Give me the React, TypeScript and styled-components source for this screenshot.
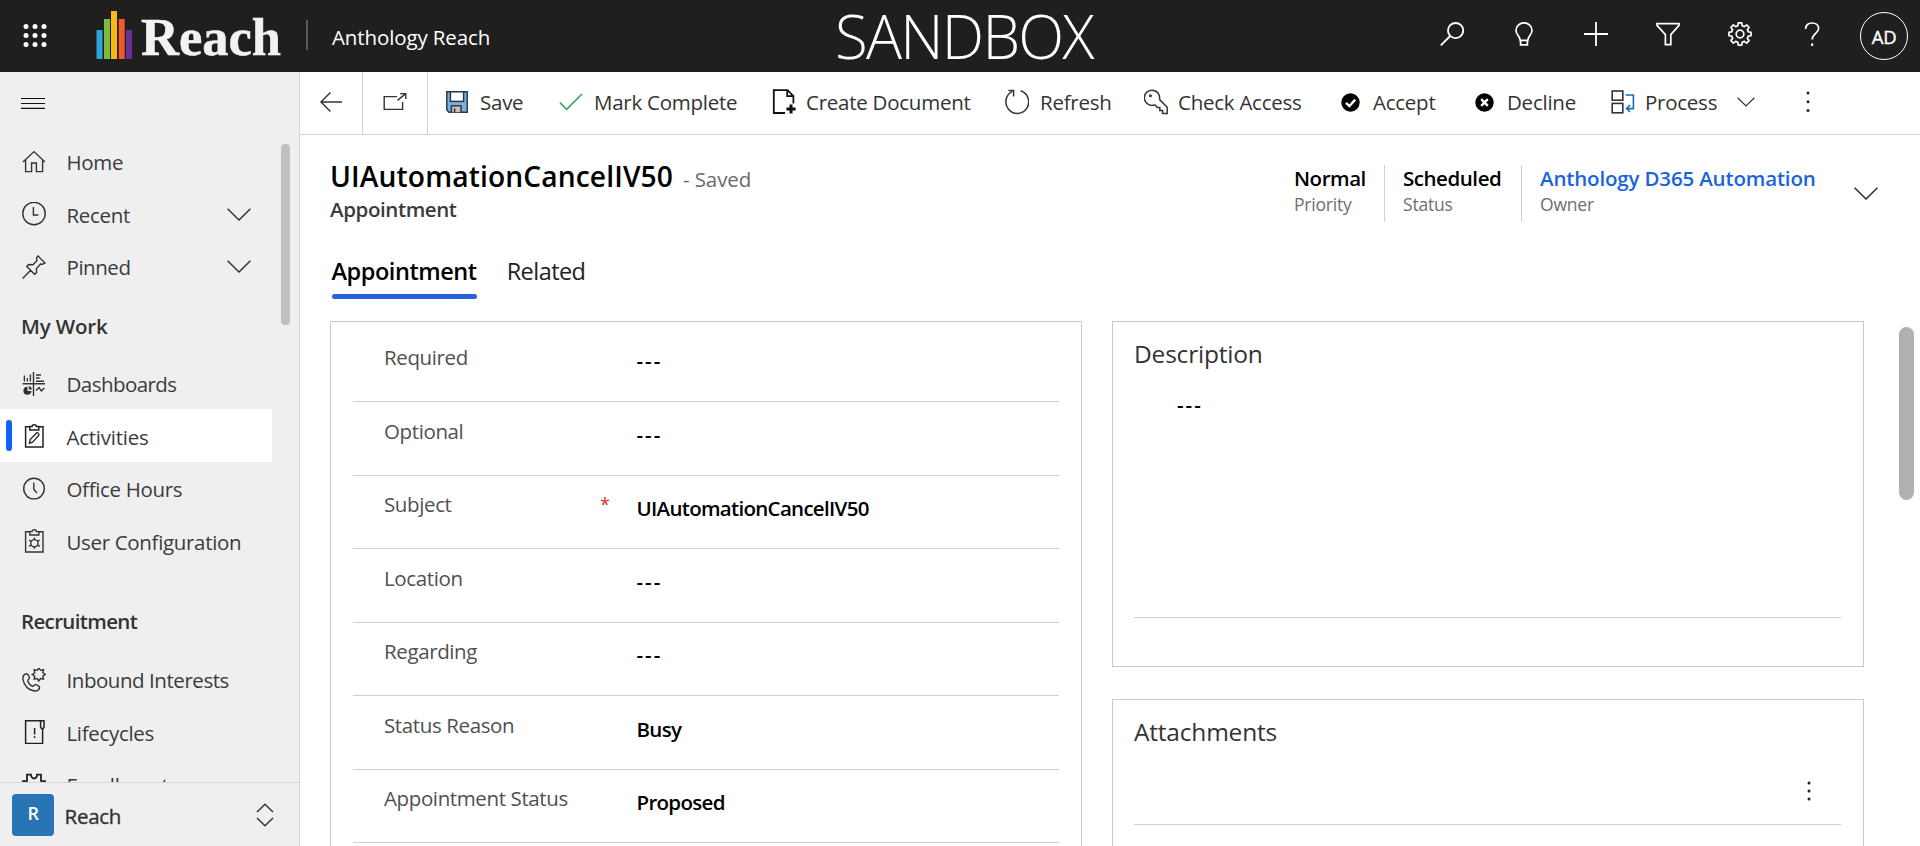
import React from "react";
import styled, { createGlobalStyle } from "styled-components";

const GlobalStyle = createGlobalStyle`
  *, *::before, *::after { box-sizing: border-box; }
  html, body { margin: 0; padding: 0; background: #fff; }
  body { overflow: hidden; }
  svg { display: block; flex: none; }
`;

const Page = styled.div`
  display: flex;
  flex-direction: column;
  width: 1920px;
  height: 846px;
  overflow: hidden;
  background: #fff;
  color: #333;
  font-family: "Open Sans", "Noto Sans", sans-serif;
  font-size: 20.5px;
  letter-spacing: -0.25px;
  white-space: nowrap;
`;

/* ---------- top bar ---------- */

const TopBar = styled.header`
  display: grid;
  grid-template-columns: 835px 1fr auto;
  flex: none;
  height: 72px;
  background: #1f1f1f;
  color: #fff;
`;

const Brand = styled.div`
  display: flex;
  align-items: center;
  height: 72px;
  padding-left: 23px;
`;

const Logo = styled.div`
  display: flex;
  align-items: center;
  margin-left: 49px;
`;

const LogoWord = styled.span`
  margin: 2px 0 0 8px;
  width: 141px;
  font: 700 52.5px/60px "Liberation Serif", serif;
  letter-spacing: 0;
  color: #f2f2f2;
  -webkit-text-stroke: 0.5px #f2f2f2;
`;

const BrandDivider = styled.span`
  width: 2px;
  height: 30px;
  margin: 0 24px 2px 24px;
  background: #5c5c5c;
`;

const AppName = styled.span`
  margin-top: 1px;
  letter-spacing: -0.12px;
`;

const Environment = styled.div`
  font-weight: 300;
  font-size: 60px;
  line-height: 72px;
  letter-spacing: -1.75px;
`;

const TopActions = styled.nav`
  display: flex;
  align-items: center;
  gap: 48px;
  height: 68px;
  padding-right: 12px;
`;

const Avatar = styled.div`
  display: flex;
  align-items: center;
  justify-content: center;
  width: 48px;
  height: 48px;
  margin: 4px 0 0 -12px;
  border: 1.5px solid #fff;
  border-radius: 50%;
  font-size: 18.5px;
  -webkit-text-stroke: 0.35px #fff;
  padding-top: 1px;
`;

/* ---------- body ---------- */

const Body = styled.div`
  display: flex;
  flex: 1;
  min-height: 0;
`;

const Sidebar = styled.aside`
  display: flex;
  flex-direction: column;
  flex: none;
  width: 300px;
  border-right: 1px solid #d6d6d6;
  background: #efefef;
`;

const NavScroll = styled.div`
  display: flex;
  flex: 1;
  min-height: 0;
  overflow: hidden;
`;

const NavList = styled.div`
  flex: none;
  width: 272px;
`;

const NavTrack = styled.div`
  padding: 72px 0 0 9px;
`;

const NavThumb = styled.div`
  width: 9px;
  height: 181px;
  border-radius: 4px;
  background: #c1c1c1;
`;

const MenuToggle = styled.div`
  height: 62.5px;
  padding: 25px 0 0 21px;
`;

const NavRow = styled.div<{ $active?: boolean }>`
  display: flex;
  align-items: center;
  height: 52.5px;
  padding: 2px 0 0 22px;
  background: ${(p) => (p.$active ? "#fff" : "transparent")};
  color: #3b3b3b;
  position: relative;

  &::before {
    content: "";
    display: ${(p) => (p.$active ? "block" : "none")};
    position: absolute;
    left: 6px;
    top: 11px;
    width: 6px;
    height: 31px;
    border-radius: 3px;
    background: #0b63f8;
  }
`;

const NavLabel = styled.span<{ $ls: number }>`
  flex: 1;
  margin-left: 20.5px;
  padding-top: 1px;
  letter-spacing: ${(p) => p.$ls}px;
`;

const NavChevron = styled.span`
  margin-right: 21px;
`;

const NavHeading = styled.div<{ $top: number; $height: number; $ls: number }>`
  height: ${(p) => p.$height}px;
  padding: ${(p) => p.$top}px 0 0 21px;
  font-weight: 600;
  line-height: 30px;
  letter-spacing: ${(p) => p.$ls}px;
  color: #333;
`;

const AreaSwitcher = styled.div`
  display: flex;
  align-items: center;
  flex: none;
  height: 64px;
  padding: 1px 25px 0 12px;
  border-top: 1px solid #d6d6d6;
`;

const AreaBadge = styled.span`
  display: flex;
  align-items: center;
  justify-content: center;
  width: 42px;
  height: 42px;
  padding-bottom: 4px;
  border-radius: 4px;
  background: #2874b4;
  color: #fff;
  font-size: 18px;
  font-weight: 600;
`;

const AreaName = styled.span`
  flex: 1;
  margin: 1px 0 0 10.5px;
  -webkit-text-stroke: 0.35px #333;
`;

/* ---------- main column ---------- */

const Main = styled.main`
  display: flex;
  flex-direction: column;
  flex: 1;
  min-width: 0;
`;

const CommandBar = styled.div`
  display: flex;
  flex: none;
  height: 63px;
  border-bottom: 1px solid #d2d2d2;
`;

const IconCell = styled.div<{ $width: number }>`
  display: flex;
  align-items: center;
  justify-content: center;
  width: ${(p) => p.$width}px;
  border-right: 1px solid #d2d2d2;
  padding: 0 1px 2px 0;
`;

const Command = styled.div<{ $width: number; $gap?: number }>`
  display: flex;
  align-items: center;
  flex: none;
  gap: ${(p) => p.$gap ?? 10}px;
  width: ${(p) => p.$width}px;
  padding-bottom: 2px;
`;

const Commands = styled.div`
  display: flex;
  padding-left: 17px;
`;

const RecordHeader = styled.div`
  display: flex;
  flex: none;
  justify-content: space-between;
  height: 110px;
  padding: 22px 42px 0 30px;
`;

const TitleLine = styled.div`
  display: flex;
  align-items: baseline;
  height: 38px;
  line-height: 38px;
`;

const Title = styled.h1`
  margin: 0;
  width: 353px;
  font-size: 28.2px;
  font-weight: 600;
  letter-spacing: 0.12px;
  color: #000;
`;

const SavedState = styled.span`
  color: #6a6a6a;
  letter-spacing: -0.1px;
`;

const EntityName = styled.div`
  margin-top: -1px;
  font-weight: 600;
  line-height: 30px;
  letter-spacing: -0.4px;
  color: #3b3b3b;
`;

const Facts = styled.div`
  display: flex;
  align-items: flex-start;
  padding-top: 8px;
`;

const Fact = styled.div<{ $width: number; $last?: boolean }>`
  width: ${(p) => p.$width}px;
  height: 57px;
  margin-right: ${(p) => (p.$last ? 0 : 18)}px;
  border-right: ${(p) => (p.$last ? "none" : "1px solid #cfcfcf")};
`;

const FactValue = styled.div<{ $link?: boolean }>`
  font-size: 20.5px;
  font-weight: 600;
  line-height: 26px;
  letter-spacing: ${(p) => (p.$link ? -0.16 : -0.45)}px;
  color: ${(p) => (p.$link ? "#1a63e0" : "#000")};
`;

const FactLabel = styled.div`
  font-size: 17.5px;
  line-height: 26px;
  letter-spacing: -0.2px;
  color: #6e6e6e;
`;

const FactChevron = styled.div`
  margin: 22px 0 0 37px;
`;

const Tabs = styled.div`
  display: flex;
  flex: none;
  gap: 30px;
  height: 76px;
  padding-left: 31.5px;
`;

const Tab = styled.div<{ $active?: boolean }>`
  height: 54px;
  padding-top: 10px;
  font-size: 23.5px;
  font-weight: ${(p) => (p.$active ? 600 : 400)};
  line-height: 32px;
  letter-spacing: ${(p) => (p.$active ? -0.45 : -0.55)}px;
  color: ${(p) => (p.$active ? "#000" : "#222")};

  &::after {
    content: "";
    display: ${(p) => (p.$active ? "block" : "none")};
    height: 5px;
    margin-top: 7px;
    border-radius: 3px;
    background: #2563dc;
  }
`;

const Content = styled.div`
  display: flex;
  flex: 1;
  min-height: 0;
  padding-left: 30px;
  overflow: hidden;
`;

const Card = styled.section<{ $height: number }>`
  flex: none;
  width: 752px;
  height: ${(p) => p.$height}px;
  border: 1px solid #c9c9c9;
  padding: 0 22px 0 22px;
`;

const SideCard = styled(Card)`
  padding: 0 22px 0 21px;
`;

const Stack = styled.div`
  display: flex;
  flex-direction: column;
  gap: 32px;
  margin-left: 30px;
`;

const FieldRow = styled.div<{ $first?: boolean }>`
  display: grid;
  grid-template-columns: 216px 36.5px 1fr;
  height: ${(p) => (p.$first ? 80 : 73.5)}px;
  padding: ${(p) => (p.$first ? 20 : 13.5)}px 0 0 31px;
  border-bottom: 1px solid #cfcfcf;
`;

const FieldLabel = styled.div`
  line-height: 30px;
  letter-spacing: -0.38px;
  color: #505050;
`;

const RequiredMark = styled.div`
  line-height: 30px;
  color: #e02b20;
  font-size: 18px;
`;

const FieldValue = styled.div`
  padding-top: 4px;
  font-weight: 600;
  line-height: 30px;
  letter-spacing: -0.7px;
  color: #000;
`;

const EmptyValue = styled(FieldValue)`
  padding-top: 3px;
  letter-spacing: 2px;
`;

const CardTitle = styled.h2`
  margin: 0;
  padding-top: 14px;
  font-size: 24.5px;
  font-weight: 400;
  line-height: 36px;
  letter-spacing: -0.2px;
  color: #333;
`;

const DescriptionBody = styled.div`
  height: 246px;
  padding: 14px 0 0 43px;
  border-bottom: 1px solid #cfcfcf;
`;

const AttachmentTools = styled.div`
  display: flex;
  justify-content: flex-end;
  height: 75px;
  padding: 31px 30px 0 0;
  border-bottom: 1px solid #cfcfcf;
`;

const PageTrack = styled.div`
  padding: 6px 0 0 35px;
`;

const PageThumb = styled.div`
  width: 15px;
  height: 173px;
  border-radius: 8px;
  background: #b0b0b0;
`;

/* ---------- icons ---------- */

type SvgProps = {
  w?: number;
  h?: number;
  color?: string;
  sw?: number;
  children: React.ReactNode;
};

const Svg = ({ w = 24, h = 24, color = "#333", sw = 1.4, children }: SvgProps) => (
  <svg width={w} height={h} viewBox={`0 0 ${w} ${h}`} fill="none" stroke={color} strokeWidth={sw}>
    {children}
  </svg>
);

const gearPath = (cx: number, cy: number, outer: number, inner: number, teeth: number) => {
  const pts: string[] = [];
  const step = (Math.PI * 2) / teeth;
  for (let i = 0; i < teeth; i++) {
    const a = i * step - Math.PI / 2;
    [
      [-0.32, inner],
      [-0.2, outer],
      [0.2, outer],
      [0.32, inner],
    ].forEach(([f, r]) => {
      pts.push(`${(cx + Math.cos(a + f * step) * r).toFixed(2)} ${(cy + Math.sin(a + f * step) * r).toFixed(2)}`);
    });
  }
  return `M${pts.join("L")}Z`;
};

const starPath = (cx: number, cy: number, outer: number, inner: number, points: number) => {
  const pts: string[] = [];
  for (let i = 0; i < points * 2; i++) {
    const a = (i * Math.PI) / points - Math.PI / 2;
    const r = i % 2 ? inner : outer;
    pts.push(`${(cx + Math.cos(a) * r).toFixed(2)} ${(cy + Math.sin(a) * r).toFixed(2)}`);
  }
  return `M${pts.join("L")}Z`;
};

const Waffle = () => (
  <svg width="24" height="24" viewBox="0 0 24 24" fill="#fff">
    {[2.5, 11.5, 20.5].map((y) => [3, 12, 21].map((x) => <circle key={`${x}-${y}`} cx={x} cy={y} r="2.5" />))}
  </svg>
);

const LogoBars = () => (
  <svg width="37" height="50" viewBox="0 0 37 50">
    <rect x="0.5" y="19" width="6" height="29" fill="#2fa4db" />
    <rect x="8" y="8" width="6" height="40" fill="#7fbb42" />
    <rect x="15" y="0" width="6" height="48" fill="#f7b917" />
    <rect x="22.7" y="8" width="6" height="40" fill="#f05a28" />
    <rect x="30" y="19" width="6" height="29" fill="#68318f" />
  </svg>
);

const SearchIcon = () => (
  <Svg color="#fff" sw={1.8}>
    <circle cx="15.6" cy="8.6" r="7.6" />
    <path d="M10.2 14 L0.8 23.4" />
  </Svg>
);

const BulbIcon = () => (
  <Svg color="#fff" sw={1.7}>
    <path d="M8.2 18.4 C8.2 14.5 4 12.5 4 8.4 A8 7.6 0 0 1 20 8.4 C20 12.5 15.8 14.5 15.8 18.4 Z" />
    <path d="M8.6 18.4 V22.9 H15.4 V18.4" />
  </Svg>
);

const PlusIcon = () => (
  <Svg color="#fff" sw={1.8}>
    <path d="M12 0 V24 M0 12 H24" />
  </Svg>
);

const FilterIcon = () => (
  <Svg color="#fff" sw={1.7}>
    <path d="M1 1.6 H23 V3.4 L14.8 12.6 V22.6 H9.4 V12.6 L1 3.4 Z" />
  </Svg>
);

const GearIcon = () => (
  <Svg color="#fff" sw={1.7}>
    <path d={gearPath(12, 12, 11.2, 8.6, 8)} strokeLinejoin="round" />
    <circle cx="12" cy="12" r="3.8" />
  </Svg>
);

const HelpIcon = () => (
  <Svg color="#fff" sw={1.7}>
    <path d="M5.6 7 C5.6 3 8.4 1 12 1 C15.8 1 18.6 3.2 18.6 6.6 C18.6 11.4 12.2 11.6 12.2 17.6" />
    <path d="M12.2 21.4 V24" strokeWidth="2" />
  </Svg>
);

const MenuIcon = () => (
  <Svg color="#111" sw={1.2} h={12}>
    <path d="M0 1.5 H24 M0 6.5 H24 M0 11.3 H24" />
  </Svg>
);

const Chevron = ({ w = 24, h = 13, color = "#333", sw = 1.5 }) => (
  <Svg w={w} h={h} color={color} sw={sw}>
    <path d={`M0.6 0.8 L${w / 2} ${h - 1} L${w - 0.6} 0.8`} />
  </Svg>
);

const HomeIcon = () => (
  <Svg>
    <path d="M1 12 L12 1.6 L23 12 M3.6 10 V21.6 H9.6 V13 H14.4 V21.6 H20.6 V10" />
  </Svg>
);

const ClockIcon = () => (
  <Svg>
    <circle cx="12" cy="11.5" r="11.2" />
    <path d="M11.4 5 V13 H16.4" />
  </Svg>
);

const PinIcon = () => (
  <Svg>
    <path d="M16 0.9 L23 7.9 L20.4 9.3 L18.6 9 L14.4 13.4 L14.6 17.6 L12.6 19.2 L4.8 11.4 L6.6 9.5 L11 9.7 L15 5.4 L14.6 2.6 Z M8.6 15.2 L0.6 23.4" />
  </Svg>
);

const DashboardIcon = () => (
  <Svg sw={1.4}>
    <path d="M11.5 0 V24 M0.5 11.8 H23 M2.4 3.6 V9.4 M5.4 6 V9.4 M8.4 2.6 V9.4 M14 3 H19 M14 6 H17.6 M14 9.2 H22" />
    <path d="M14 18.4 L17 15.6 L19.4 19 L22.4 16" />
    <path d="M5.4 14.8 A4 4 0 1 0 9.4 19 L5.6 19 Z" fill="#333" stroke="none" />
    <path d="M6.8 14 A3.6 3.6 0 0 1 9.8 17.4 H6.8 Z" fill="#333" stroke="none" />
  </Svg>
);

const ClipboardFrame = () => (
  <path d="M8 2.8 H3.6 V23 H21 V2.8 H16.4 M7.8 2.6 H10 C10 0.2 14.4 0.2 14.4 2.6 H16.8 V6 H7.8 Z" />
);

const ActivityIcon = () => (
  <Svg color="#222" sw={1.5}>
    <ClipboardFrame />
    <path d="M7.4 19.2 L8.2 15.6 L14.4 9 C15.6 8.2 17.6 10 16.8 11.4 L10.6 18.2 Z" strokeWidth="1.3" />
  </Svg>
);

const OfficeClockIcon = () => (
  <Svg>
    <circle cx="12" cy="11.6" r="10.3" />
    <path d="M11.8 5.4 V12.4 L15 16" />
  </Svg>
);

const UserConfigIcon = () => (
  <Svg>
    <ClipboardFrame />
    <circle cx="12.4" cy="14.2" r="3.6" />
    <path d="M12.4 8.6 V10.6 M12.4 17.8 V19.8 M7 11 L9.2 12.4 M15.6 12.4 L17.8 11 M7 17.4 L9.2 16 M15.6 16 L17.8 17.4" />
  </Svg>
);

const InboundIcon = () => (
  <Svg>
    <path d={starPath(16.8, 6.4, 6.6, 4.4, 8)} />
    <path d="M4.4 5.8 C2 6.4 0.6 8.2 0.9 11 C1.8 17.4 6.4 22.4 12.8 23 C15.2 23.2 17 22 17.6 19.8 C18 18.4 14.6 16.4 13.2 16.6 C11.8 17 11.8 18.6 10.4 18.2 C8 17.2 6.4 15.2 5.8 12.8 C5.6 11.4 7.4 11.2 7.4 9.8 C7.2 8.4 5.8 5.6 4.4 5.8 Z" />
  </Svg>
);

const LifecycleIcon = () => (
  <Svg color="#222" sw={1.5}>
    <path d="M18.6 0.8 H3.6 V23.4 H20.6 V9.6 M18.6 0.8 H22 V7.2 L20.4 9.6 L18.6 7.2 Z M12.6 8 V14.6 M12.6 16.2 V18" />
  </Svg>
);

const EnrollmentIcon = () => (
  <Svg color="#222" sw={1.8}>
    <path d="M1 9.6 V8.2 L5 8 V1.6 H9 C9 6.8 15 6.8 15 1.6 H19 V8 L23 8.2 V9.6" />
  </Svg>
);

const UpDownIcon = () => (
  <Svg w={18} h={24} sw={1.5}>
    <path d="M1 9 L9 1.2 L17 9 M1 15 L9 22.8 L17 15" />
  </Svg>
);

const BackIcon = () => (
  <Svg w={22} h={20} sw={1.4}>
    <path d="M10.4 0.6 L1 10 L10.4 19.4 M1 10 H22" />
  </Svg>
);

const PopOutIcon = () => (
  <Svg sw={1.4}>
    <path d="M14 6.6 H1.2 V19.4 H19.6 V12 M14.6 10.4 L22.6 3.6 M17.2 3.6 H22.8 V9" />
  </Svg>
);

const SaveIcon = () => (
  <Svg w={24} sw={1.5} color="#2b3a4a">
    <path d="M1.8 1.8 H22.2 V22.2 H4 L1.8 20 Z" fill="#7ab2dd" />
    <rect x="5.4" y="1.8" width="13.2" height="9.6" fill="#fff" />
    <path d="M6.4 22.2 V15.8 H16 V22.2" fill="#c9c1b6" />
    <path d="M9.6 18.4 V22" />
  </Svg>
);

const CheckIcon = () => (
  <Svg sw={1.7} color="#3fa468">
    <path d="M1 12.6 L7.6 19.4 L23 4" />
  </Svg>
);

const CreateDocIcon = () => (
  <Svg sw={1.8} color="#111" h={26}>
    <path d="M13 24 H1.8 V1.2 H15.6 L21.4 7 V14.4 M15.2 1.4 V7.2 H21.2" />
    <path d="M19 15.4 V24.6 M14.4 20 H23.6" strokeWidth="3" />
  </Svg>
);

const RefreshIcon = () => (
  <Svg sw={1.5} h={26}>
    <path d="M15.6 1.8 A11.4 11.6 0 1 1 7.4 2.4" />
    <path d="M3.4 1.6 H8.6 V7.4" />
  </Svg>
);

const KeyIcon = () => (
  <Svg sw={1.5} h={26}>
    <path d="M15.4 10.4 L23.2 18.2 V24.6 H18.6 V21.6 H15.8 V18.4 H13.4 L10.8 15.8" />
    <path d="M10.8 15.8 A7.6 7.6 0 1 1 15.4 10.4" />
    <circle cx="6.4" cy="6.8" r="1.5" fill="#333" stroke="none" />
  </Svg>
);

const AcceptIcon = () => (
  <Svg w={19} h={19} sw={2.4} color="#fff">
    <circle cx="9.5" cy="9.5" r="9.2" fill="#000" stroke="none" />
    <path d="M5 9.8 L8.4 13 L14.2 6.6" />
  </Svg>
);

const DeclineIcon = () => (
  <Svg w={19} h={19} sw={2.4} color="#fff">
    <circle cx="9.5" cy="9.5" r="9.2" fill="#000" stroke="none" />
    <path d="M6.2 6.2 L12.8 12.8 M12.8 6.2 L6.2 12.8" />
  </Svg>
);

const ProcessIcon = () => (
  <Svg sw={1.6}>
    <rect x="1.2" y="1" width="10.6" height="9.2" />
    <rect x="1.2" y="13.4" width="10.6" height="9.4" />
    <path d="M14.6 5 H22.4 V18.6 H16 M19 15 L15.6 18.6 L19 22" stroke="#1f6bb3" />
  </Svg>
);

const DotsIcon = () => (
  <svg width="4" height="22" viewBox="0 0 4 22" fill="#222">
    <circle cx="2" cy="2" r="1.5" />
    <circle cx="2" cy="10.8" r="1.5" />
    <circle cx="2" cy="19.6" r="1.5" />
  </svg>
);

const SmallDotsIcon = () => (
  <svg width="4" height="20" viewBox="0 0 4 20" fill="#222">
    <circle cx="2" cy="2" r="1.5" />
    <circle cx="2" cy="10" r="1.5" />
    <circle cx="2" cy="18" r="1.5" />
  </svg>
);

/* ---------- data ---------- */

const fields: { label: string; value?: string; required?: boolean }[] = [
  { label: "Required" },
  { label: "Optional" },
  { label: "Subject", value: "UIAutomationCancelIV50", required: true },
  { label: "Location" },
  { label: "Regarding" },
  { label: "Status Reason", value: "Busy" },
  { label: "Appointment Status", value: "Proposed" },
];

type NavItemProps = {
  icon: React.ReactNode;
  label: string;
  active?: boolean;
  expandable?: boolean;
  spacing?: number;
};

const NavItem = ({ icon, label, active, expandable, spacing = -0.33 }: NavItemProps) => (
  <NavRow $active={active}>
    {icon}
    <NavLabel $ls={spacing}>{label}</NavLabel>
    {expandable && (
      <NavChevron>
        <Chevron />
      </NavChevron>
    )}
  </NavRow>
);

export default function App() {
  return (
    <Page>
      <GlobalStyle />
      <TopBar>
        <Brand>
          <Waffle />
          <Logo>
            <LogoBars />
            <LogoWord>Reach</LogoWord>
          </Logo>
          <BrandDivider />
          <AppName>Anthology Reach</AppName>
        </Brand>
        <Environment>SANDBOX</Environment>
        <TopActions>
          <SearchIcon />
          <BulbIcon />
          <PlusIcon />
          <FilterIcon />
          <GearIcon />
          <HelpIcon />
          <Avatar>AD</Avatar>
        </TopActions>
      </TopBar>
      <Body>
        <Sidebar>
          <NavScroll>
            <NavList>
              <MenuToggle>
                <MenuIcon />
              </MenuToggle>
              <NavItem icon={<HomeIcon />} label="Home" />
              <NavItem icon={<ClockIcon />} label="Recent" expandable />
              <NavItem icon={<PinIcon />} label="Pinned" expandable spacing={-0.45} />
              <NavHeading $top={19} $height={64.5} $ls={-0.15}>My Work</NavHeading>
              <NavItem icon={<DashboardIcon />} label="Dashboards" spacing={-0.55} />
              <NavItem icon={<ActivityIcon />} label="Activities" active spacing={-0.25} />
              <NavItem icon={<OfficeClockIcon />} label="Office Hours" />
              <NavItem icon={<UserConfigIcon />} label="User Configuration" />
              <NavHeading $top={39} $height={86} $ls={-0.65}>Recruitment</NavHeading>
              <NavItem icon={<InboundIcon />} label="Inbound Interests" spacing={-0.45} />
              <NavItem icon={<LifecycleIcon />} label="Lifecycles" />
              <NavItem icon={<EnrollmentIcon />} label="Enrollments" />
            </NavList>
            <NavTrack>
              <NavThumb />
            </NavTrack>
          </NavScroll>
          <AreaSwitcher>
            <AreaBadge>R</AreaBadge>
            <AreaName>Reach</AreaName>
            <UpDownIcon />
          </AreaSwitcher>
        </Sidebar>
        <Main>
          <CommandBar>
            <IconCell $width={63}><BackIcon /></IconCell>
            <IconCell $width={65}><PopOutIcon /></IconCell>
            <Commands>
              <Command $width={114} $gap={11}><SaveIcon />Save</Command>
              <Command $width={213} $gap={11}><CheckIcon />Mark Complete</Command>
              <Command $width={233}><CreateDocIcon />Create Document</Command>
              <Command $width={139} $gap={11}><RefreshIcon />Refresh</Command>
              <Command $width={197}><KeyIcon />Check Access</Command>
              <Command $width={134} $gap={13}><AcceptIcon />Accept</Command>
              <Command $width={136} $gap={13}><DeclineIcon />Decline</Command>
              <Command $width={126}><ProcessIcon />Process</Command>
              <Command $width={69}><Chevron w={18} h={10} sw={1.2} /></Command>
              <Command $width={20}><DotsIcon /></Command>
            </Commands>
          </CommandBar>
          <RecordHeader>
            <div>
              <TitleLine>
                <Title>UIAutomationCancelIV50</Title>
                <SavedState>- Saved</SavedState>
              </TitleLine>
              <EntityName>Appointment</EntityName>
            </div>
            <Facts>
              <Fact $width={91}>
                <FactValue>Normal</FactValue>
                <FactLabel>Priority</FactLabel>
              </Fact>
              <Fact $width={119}>
                <FactValue>Scheduled</FactValue>
                <FactLabel>Status</FactLabel>
              </Fact>
              <Fact $width={277} $last>
                <FactValue $link>Anthology D365 Automation</FactValue>
                <FactLabel>Owner</FactLabel>
              </Fact>
              <FactChevron>
                <Chevron w={24} h={13} sw={1.6} />
              </FactChevron>
            </Facts>
          </RecordHeader>
          <Tabs>
            <Tab $active>Appointment</Tab>
            <Tab>Related</Tab>
          </Tabs>
          <Content>
            <Card $height={620}>
              {fields.map((f, i) => (
                <FieldRow key={f.label} $first={i === 0}>
                  <FieldLabel>{f.label}</FieldLabel>
                  <RequiredMark>{f.required ? "*" : ""}</RequiredMark>
                  {f.value ? <FieldValue>{f.value}</FieldValue> : <EmptyValue>---</EmptyValue>}
                </FieldRow>
              ))}
            </Card>
            <Stack>
              <SideCard $height={346}>
                <CardTitle>Description</CardTitle>
                <DescriptionBody>
                  <EmptyValue>---</EmptyValue>
                </DescriptionBody>
              </SideCard>
              <SideCard $height={200}>
                <CardTitle>Attachments</CardTitle>
                <AttachmentTools>
                  <SmallDotsIcon />
                </AttachmentTools>
              </SideCard>
            </Stack>
            <PageTrack>
              <PageThumb />
            </PageTrack>
          </Content>
        </Main>
      </Body>
    </Page>
  );
}
